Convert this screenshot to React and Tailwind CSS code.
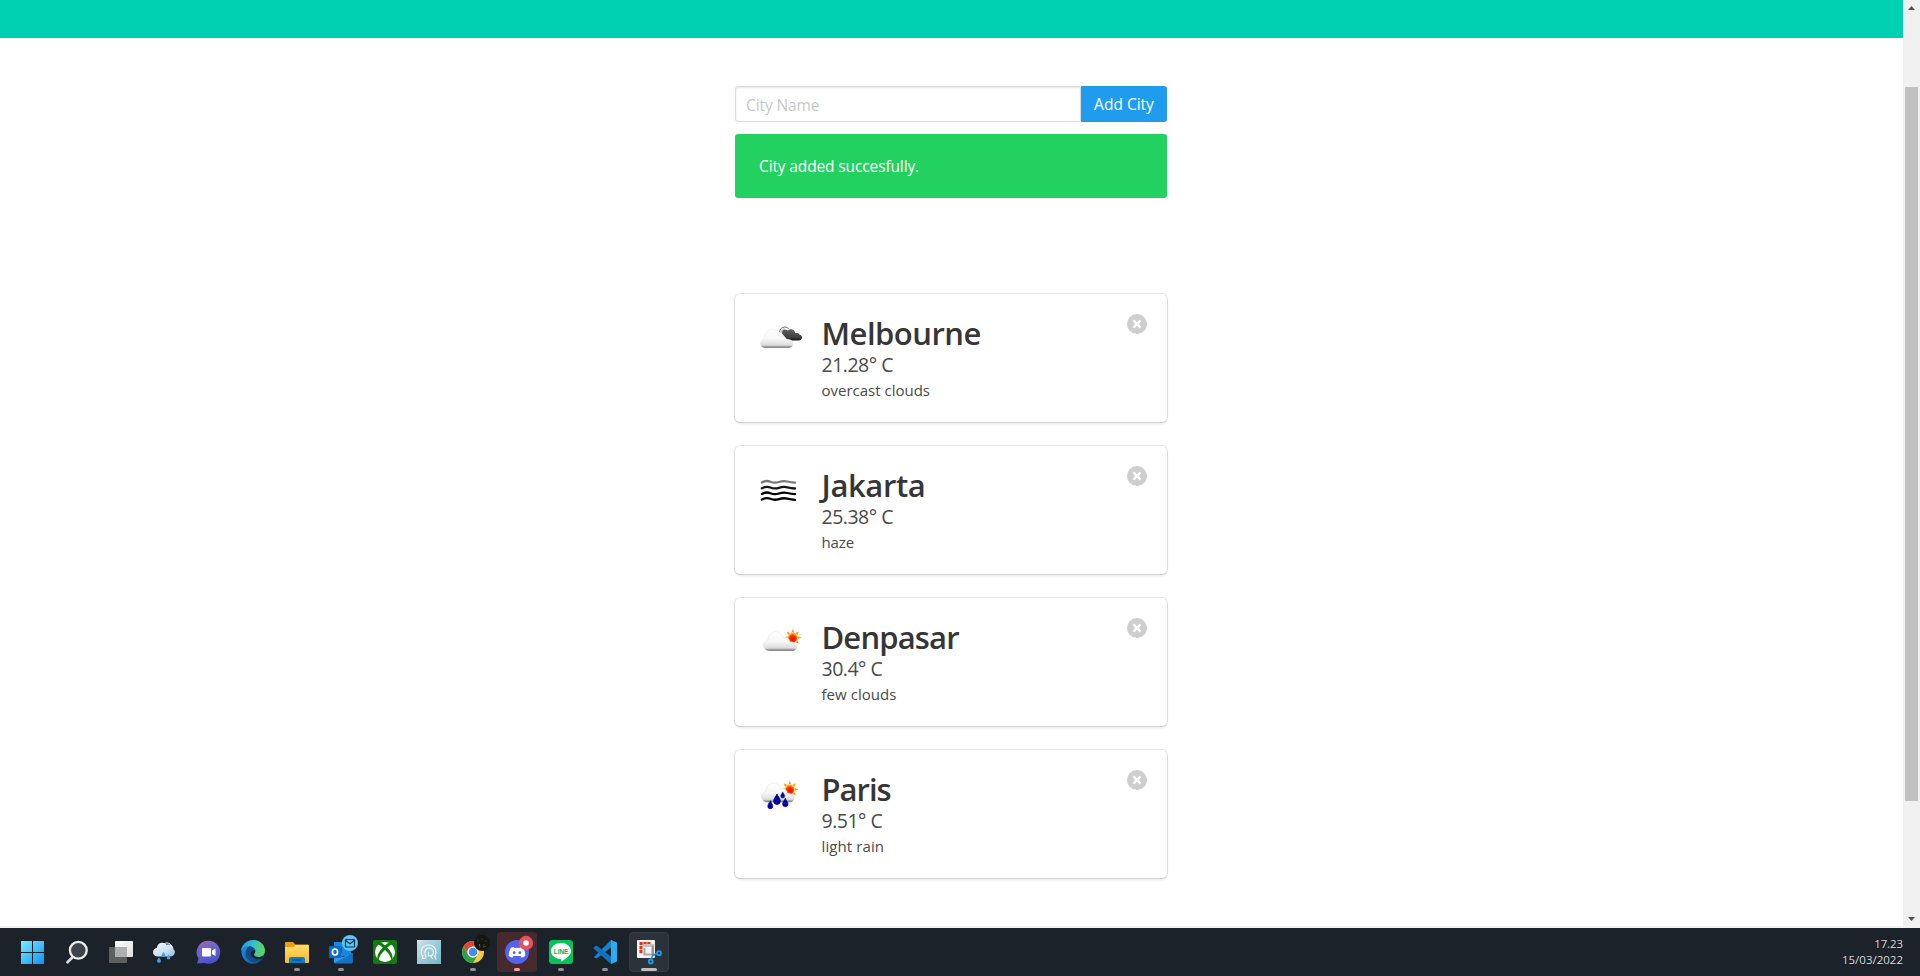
import React from "react";

const CLOUD = "M6 23.5c-4-.3-5.600-3.200-5.200-6.200.4-2.800 2.400-3.800 4-4.200.2-4.600 3.300-8 7.200-8s6.400 2.400 7.200 5.500c4-1 6 1.500 6.300 4 3.500.3 6.500 1.900 6.500 4.600 0 2.600-1.600 4.300-4 4.300z";

function SunRays({ cx, cy, r, len }) {
  const points = [];
  for (let i = 0; i < 8; i++) {
    const a = (i * Math.PI) / 4 - Math.PI / 2;
    const at = (radius, angle) => `${(cx + radius * Math.cos(angle)).toFixed(2)},${(cy + radius * Math.sin(angle)).toFixed(2)}`;
    points.push(`${at(r, a - 0.27)} ${at(r + len, a)} ${at(r, a + 0.27)}`);
  }
  return points.map((p) => <polygon key={p} points={p} fill="#ff9a0c" />);
}

function WeatherDefs({ id }) {
  return (
    <defs>
      <linearGradient id={`cloud-${id}`} x1="0" y1="0" x2="0" y2="1">
        <stop offset="0" stopColor="#fdfdfd" />
        <stop offset=".5" stopColor="#f8f8f8" />
        <stop offset=".85" stopColor="#dcdcdc" />
        <stop offset=".93" stopColor="#9a9a9a" />
        <stop offset="1" stopColor="#666" />
      </linearGradient>
      <radialGradient id={`sun-${id}`} cx=".5" cy=".6" r=".6">
        <stop offset="0" stopColor="#ff0a00" />
        <stop offset=".6" stopColor="#ff2a00" />
        <stop offset="1" stopColor="#ff9a0c" />
      </radialGradient>
      <linearGradient id={`dark-${id}`} x1="0" y1="0" x2="0" y2="1">
        <stop offset="0" stopColor="#606060" />
        <stop offset=".7" stopColor="#404040" />
        <stop offset="1" stopColor="#151515" />
      </linearGradient>
    </defs>
  );
}

function Overcast() {
  return (
    <svg className="h-[50px] w-[50px]" viewBox="0 0 50 50">
      <WeatherDefs id="o" />
      <path d="M27 19.500c-.2-2 .8-4 3-4 1 0 2 .3 2.800 1 1.400-1.200 3-1.600 4.700-.9 1.700.6 2.500 2 2.600 3.500 2.500-.3 4 .3 4.400 1.700 1.600.3 2.500 1.400 2.500 2.800 0 1.700-1.200 2.800-3 2.800H33z" fill="url(#dark-o)" />
      <path d="M24.500 18.200c.4-3.400 2.600-5.200 5.300-5.200 1.800 0 3 .7 3.700 1.800" fill="none" stroke="#6a6a6a" strokeWidth="1" />
      <path d="M26 18.800c.4-2.600 1.900-3.900 3.700-3.900" fill="none" stroke="#8a8a8a" strokeWidth=".8" />
      <path d="M9.500 34c-3.200-.3-4.300-2.700-3.900-5.200.4-2.200 1.900-3.300 3.500-3.700.2-5.600 3.500-9.800 8-9.800 4.200 0 7.300 3 8 6.700 3-.7 4.900.8 5.200 3.400 4.500-.7 7.600.9 7.600 4.300 0 2.700-1.700 4.300-4.400 4.300z" fill="url(#cloud-o)" stroke="#dedede" strokeWidth=".4" />
    </svg>
  );
}

function Haze() {
  const wave = (y) => `M6.900 ${y + 1}q4.500-2.500 8.500-.8t8.500.3 8.500-.5 7.600 1.200`;
  return (
    <svg className="h-[50px] w-[50px]" viewBox="0 0 50 50" fill="none" strokeWidth="2.300" strokeLinecap="round">
      <path d={wave(15.5)} stroke="#777" />
      <path d={wave(21.3)} stroke="#151515" />
      <path d={wave(27)} stroke="#000" />
      <path d={wave(32.6)} stroke="#000" />
    </svg>
  );
}

function FewClouds() {
  return (
    <svg className="h-[50px] w-[50px]" viewBox="0 0 50 50">
      <WeatherDefs id="f" />
      <SunRays cx={37.8} cy={19.6} r={5.4} len={3.2} />
      <circle cx="37.800" cy="19.600" r="4.900" fill="#ffab22" />
      <circle cx="37.800" cy="20" r="4.300" fill="url(#sun-f)" />
      <path transform="translate(7.900 8.300) scale(1.060 1.050)" d={CLOUD} fill="url(#cloud-f)" stroke="#d8d8d8" strokeWidth=".4" />
    </svg>
  );
}

function Drop({ x, y, s }) {
  return <path transform={`translate(${x} ${y}) scale(${s})`} d="M0-5C1-2.500 3.200-.7 3.200 1.800a3.200 3.200 0 0 1-6.400 0C-3.200-.7-1-2.500 0-5z" fill="#0606ad" stroke="#00005e" strokeWidth=".7" />;
}

function LightRain() {
  return (
    <svg className="h-[50px] w-[50px]" viewBox="0 0 50 50">
      <WeatherDefs id="r" />
      <SunRays cx={34.8} cy={19.4} r={5.4} len={3.2} />
      <circle cx="34.800" cy="19.400" r="4.900" fill="#ffab22" />
      <circle cx="34.800" cy="19.800" r="4.300" fill="url(#sun-r)" />
      <path transform="translate(5.900 7.600) scale(1.040 1.050)" d={CLOUD} fill="url(#cloud-r)" stroke="#d8d8d8" strokeWidth=".4" />
      <Drop x={15.3} y={34.7} s={0.8} />
      <Drop x={22} y={29.2} s={1.05} />
      <Drop x={30.3} y={32.5} s={0.85} />
      <Drop x={27.7} y={25} s={0.62} />
    </svg>
  );
}

const CITIES = [
  { name: "Melbourne", track: "tracking-[-0.5px]", temp: "21.28° C", text: "overcast clouds", textTrack: "tracking-[0px]", Icon: Overcast },
  { name: "Jakarta", track: "tracking-[-0.4px]", temp: "25.38° C", text: "haze", textTrack: "tracking-[-0.1px]", Icon: Haze },
  { name: "Denpasar", track: "tracking-[-0.85px]", temp: "30.4° C", text: "few clouds", textTrack: "tracking-[0.05px]", Icon: FewClouds },
  { name: "Paris", track: "tracking-[-1px]", temp: "9.51° C", text: "light rain", textTrack: "tracking-[0.1px]", Icon: LightRain },
];

function CityCard({ name, track, temp, text, textTrack, Icon }) {
  return (
    <article className="flex h-32 w-[432px] rounded-[5px] bg-white p-5 shadow-[0_2px_3px_rgba(10,10,10,0.1),0_0_0_1px_rgba(10,10,10,0.1)]">
      <div className="w-[66.500px] shrink-0">
        <Icon />
      </div>
      <div className="flex-1 whitespace-nowrap text-[#4a4a4a]">
        <h2 className={`h-9 text-[31px] leading-[38px] font-semibold text-[#363636] ${track}`}>{name}</h2>
        <p className="h-[27px] text-[19.500px] leading-[30px] tracking-[-0.5px]">{temp}</p>
        <p className={`text-[15px] leading-[27px] ${textTrack}`}>{text}</p>
      </div>
      <button className="h-5 w-5 shrink-0">
        <svg className="h-5 w-5" viewBox="0 0 20 20">
          <circle cx="10" cy="10" r="10" fill="#cecece" />
          <path d="M6.400 6.400l7.200 7.200M13.600 6.400l-7.200 7.200" stroke="#fff" strokeWidth="2.400" />
        </svg>
      </button>
    </article>
  );
}

function Pill({ x = 19, w = 6, fill = "#8f9297" }) {
  return <rect x={x} y="40" width={w} height="3" rx="1.500" fill={fill} />;
}

const TASKBAR = [
  {
    label: "Start",
    art: (
      <>
        <defs><linearGradient id="win" x1="10" y1="13" x2="33" y2="36" gradientUnits="userSpaceOnUse"><stop stopColor="#7beafd" /><stop offset="1" stopColor="#0c93f4" /></linearGradient></defs>
        <path d="M10 13h11v11H10zM22 13h11v11H22zM10 25h11v11H10zM22 25h11v11H22z" fill="url(#win)" />
      </>
    ),
  },
  {
    label: "Search",
    art: (
      <>
        <path d="M17.500 29.200l-5 5" stroke="#d9dadb" strokeWidth="2.800" strokeLinecap="round" />
        <circle cx="23.300" cy="22.300" r="8.400" fill="#3e444b" stroke="#eeeeef" strokeWidth="2.300" />
      </>
    ),
  },
  {
    label: "Task View",
    art: (
      <>
        <defs><linearGradient id="tv" x1="0" y1="0" x2="1" y2="1"><stop stopColor="#fff" /><stop offset="1" stopColor="#dedede" /></linearGradient></defs>
        <rect x="10" y="19" width="18" height="16" rx=".8" fill="#5e5f60" />
        <rect x="16" y="13" width="18" height="16" rx=".8" fill="url(#tv)" />
        <path d="M16 19h12v10H16z" fill="#b0b0b0" />
      </>
    ),
  },
  {
    label: "Weather",
    art: (
      <>
        <defs><linearGradient id="wc" x1="0" y1="0" x2="1" y2="1"><stop stopColor="#f6fbff" /><stop offset=".6" stopColor="#c9dff2" /><stop offset="1" stopColor="#8fb8de" /></linearGradient></defs>
        <path d="M15 28.500c-3 0-5-1.700-5-4.200 0-2.300 1.500-4 3.700-4.300.6-3.300 2.700-5.200 5.800-5.200 1.800 0 3 .8 4 2 4.500-1 7 1.500 6.900 4.500 1.200.8 1.700 1.800 1.500 3.200-.4 2.400-2.200 4-5 4z" fill="url(#wc)" />
        <path d="M21.500 15.500c3.500-1.500 6.800.3 7.500 4" fill="none" stroke="#fff" strokeWidth="1" />
        <path d="M20.500 24c1.400 1.900 1.700 2.600 1.700 3.200a1.700 1.700 0 0 1-3.400 0c0-.6.300-1.300 1.700-3.200zM16 29.500c1.600 2 1.900 2.700 1.900 3.400a1.900 1.900 0 0 1-3.800 0c0-.7.300-1.400 1.900-3.400zM25.500 26.500c1.500 1.900 1.800 2.500 1.800 3.200a1.800 1.800 0 0 1-3.600 0c0-.7.300-1.300 1.800-3.200z" fill="#40a0ef" />
      </>
    ),
  },
  {
    label: "Chat",
    art: (
      <>
        <defs><linearGradient id="chat" x1="0" y1="0" x2=".4" y2="1"><stop stopColor="#a466b6" /><stop offset=".5" stopColor="#6d62c8" /><stop offset="1" stopColor="#4a55cc" /></linearGradient></defs>
        <path d="M21.500 12.800A11.500 11.500 0 1 1 17.500 35L10 35.500l1.500-5A11.500 11.500 0 0 1 21.500 12.800z" fill="url(#chat)" />
        <rect x="15" y="20" width="9" height="8.500" rx="1" fill="#fff" />
        <path d="M25 22.500l3.500-2v7.500L25 26z" fill="#fff" />
      </>
    ),
  },
  {
    label: "Edge",
    art: (
      <>
        <defs>
          <linearGradient id="eg" x1="10" y1="18" x2="34" y2="24" gradientUnits="userSpaceOnUse"><stop stopColor="#2098d8" /><stop offset=".45" stopColor="#35bfd3" /><stop offset="1" stopColor="#69d64b" /></linearGradient>
          <linearGradient id="eb" x1="0" y1="0" x2="1" y2="1"><stop stopColor="#2793dd" /><stop offset="1" stopColor="#10509d" /></linearGradient>
        </defs>
        <circle cx="22" cy="24" r="11.500" fill="url(#eb)" />
        <path d="M10 23c.3-6 5.500-11 12-11 7 0 12 5 12 10.500 0 4-3 6.500-6.500 6.500-2.500 0-4.500-1-4.500-2.300 0-.7 1.200-1.200 1.200-3.200 0-2.900-2.800-5.500-6.700-5.500-3.500 0-6.300 2-7.500 5z" fill="url(#eg)" />
        <path d="M18.500 18.200c-4 2-5.300 8.300-2.300 12.300 3.200 4.300 10 5 14.500 1-4.500 1.600-11.500-.8-11-6.500.2-2.700 2-3.700 4.400-3.200-1-2.300-3.200-3.600-5.600-3.600z" fill="#114a8b" />
        <path d="M23 26.700c0 1.300 2 2.300 4.500 2.300 1.800 0 3.300-.6 4.400-1.600l-.6 3.100c-4 2.200-12.500.2-11.600-5.500.3-2 1.700-3.300 4.400-3.200.9 2.900-1.100 3.800-1.100 4.900z" fill="#1d232c" />
      </>
    ),
  },
  {
    label: "File Explorer",
    art: (
      <>
        <defs><linearGradient id="fold" x1="0" y1="0" x2="0" y2="1"><stop stopColor="#ffdc6b" /><stop offset="1" stopColor="#f7b92a" /></linearGradient></defs>
        <path d="M10 15a1 1 0 0 1 1-1h7l2.500 2.500H33a1 1 0 0 1 1 1V22H10z" fill="#e6a117" />
        <path d="M10 19h8.500l2-2H33a1 1 0 0 1 1 1v16a1 1 0 0 1-1 1H11a1 1 0 0 1-1-1z" fill="url(#fold)" />
        <path d="M14 35v-4a2 2 0 0 1 2-2h12a2 2 0 0 1 2 2v4z" fill="#117ac9" />
        <path d="M17.500 32h9" stroke="#0e4f8b" strokeWidth="1.200" />
        <Pill />
      </>
    ),
  },
  {
    label: "Outlook",
    art: (
      <>
        <path d="M15 14h17v14H15z" fill="#1787dc" />
        <path d="M15 19h8v6h-8z" fill="#0a5ca8" />
        <path d="M15 25l9 4 9.500-4v9a1.200 1.200 0 0 1-1.200 1.200H16A1.200 1.200 0 0 1 15 34z" fill="#2a9ceb" />
        <path d="M33.500 25L15 35.200h17.300a1.200 1.200 0 0 0 1.200-1.200z" fill="#1672c7" />
        <rect x="10" y="18" width="12" height="12" rx="1" fill="#0a6cc7" />
        <ellipse cx="16" cy="24" rx="2.600" ry="3" fill="none" stroke="#fff" strokeWidth="1.700" />
        <circle cx="31" cy="15" r="8" fill="#5ec3f6" />
        <rect x="26.500" y="11.500" width="9" height="7.500" rx=".6" fill="none" stroke="#12344a" strokeWidth="1.200" />
        <path d="M26.800 12.500L31 15.800l4.200-3.300" fill="none" stroke="#12344a" strokeWidth="1.100" />
        <Pill />
      </>
    ),
  },
  {
    label: "Xbox",
    art: (
      <>
        <rect x="10" y="12" width="24" height="24" rx="2" fill="#117b10" />
        <circle cx="22" cy="24" r="10" fill="#fff" />
        <path d="M22 17.200c-2.400-2-4.600-2.800-6-2.300-1 .6-1.500 1-1.800 1.500 2 .2 4 1.600 5.500 3.200-3.400 3.700-5.700 7.700-5.200 10.800.3.700.7 1.200 1.200 1.600.2-3.200 3.100-7 6.300-9.900 3.200 2.900 6.100 6.700 6.300 9.900.5-.4.900-.9 1.200-1.600.5-3.100-1.800-7.100-5.200-10.800 1.500-1.600 3.500-3 5.500-3.200-.3-.5-.8-.9-1.800-1.500-1.400-.5-3.600.3-6 2.300z" fill="#117b10" />
      </>
    ),
  },
  {
    label: "Assistant",
    art: (
      <>
        <defs><linearGradient id="asst" x1="0" y1="0" x2="1" y2="1"><stop stopColor="#d4e3e8" /><stop offset=".5" stopColor="#9cc9d8" /><stop offset="1" stopColor="#72b5cd" /></linearGradient></defs>
        <path d="M10 12h24v24H10z" fill="url(#asst)" />
        <path d="M18.500 30.500h-2.800v-2.800c-1.400-1-1.700-2.500-1.500-4.200.3-3.900 3.400-6.500 7.500-6.500 4.400 0 7.300 3 7.300 6.800 0 1.700-.5 3-1.300 4.200l1.300 3.500" fill="none" stroke="#f5fcff" strokeWidth="1.200" />
        <path d="M18.500 30.500c.5-1 .3-2.500-.2-3.800-1.500-3.700.7-6.700 3.700-6.700 2.500 0 4.300 1.800 4.300 4.200 0 2-1.300 3.600-3.300 3.600h-1.500M21.500 24v4.500M23.500 28l2.500 3" fill="none" stroke="#f5fcff" strokeWidth="1.100" />
      </>
    ),
  },
  {
    label: "Chrome",
    art: (
      <>
        <circle cx="22" cy="24" r="11" fill="#fbc934" />
        <path d="M12.500 18.500A11 11 0 0 1 31.500 18.500H22a5.500 5.500 0 0 0-4.800 8.200z" fill="#e14538" />
        <path d="M12.500 18.500A11 11 0 0 0 22 35l4.800-8.200a5.500 5.500 0 0 1-9.600 0z" fill="#27a350" />
        <circle cx="22" cy="24" r="5.600" fill="#fff" />
        <circle cx="22" cy="24" r="4.300" fill="#438bed" />
        <circle cx="31" cy="15" r="8" fill="#17150f" />
        <path d="M27 11v3M29 17v3M33 16v4M35 12v2M31 10v2" stroke="#3d341c" strokeWidth="1.200" />
        <path d="M28.500 16v2M34 18v1" stroke="#7d6630" strokeWidth="1" />
        <Pill />
      </>
    ),
  },
  {
    label: "Discord",
    art: (
      <>
        <rect x="2" y="4" width="40" height="40" rx="3.500" fill="#472a2d" />
        <circle cx="22" cy="24" r="12" fill="#5663ef" />
        <path d="M18.800 19c-1.300.2-2.500.7-3.200 1.200-1.300 2.500-2 5-1.900 7.800 1.200.9 2.500 1.400 3.700 1.700l1-1.700h7.200l1 1.700c1.200-.3 2.500-.8 3.700-1.700.1-2.800-.6-5.300-1.900-7.800-.7-.5-1.900-1-3.200-1.200l-.6 1.100a10 10 0 0 0-5.200 0z" fill="#fff" />
        <circle cx="19.200" cy="24.700" r="1.400" fill="#5663ef" />
        <circle cx="24.800" cy="24.700" r="1.400" fill="#5663ef" />
        <circle cx="31" cy="15" r="7.200" fill="#e3535a" />
        <circle cx="31" cy="15" r="2.800" fill="#fff" />
        <Pill fill="#ff9ba2" />
      </>
    ),
  },
  {
    label: "LINE chat",
    art: (
      <>
        <rect x="10" y="12" width="24" height="24" rx="3.500" fill="#07c255" />
        <path d="M22 15c5.500 0 10 3.500 10 8 0 4-4.500 7.500-10 10.800.6-1.700.5-2.700-.3-2.800C16 30.600 12 27.400 12 23c0-4.500 4.500-8 10-8z" fill="#fff" />
        <text x="22" y="25.600" textAnchor="middle" textLength="14.500" lengthAdjust="spacingAndGlyphs" fontFamily="Liberation Sans, sans-serif" fontSize="7" fontWeight="700" fill="#07b34e">LINE</text>
        <Pill />
      </>
    ),
  },
  {
    label: "Code editor",
    art: (
      <>
        <path d="M28 12l6 2.500v19L28 36z" fill="#2eaaf0" />
        <path d="M11.500 28.500L28 12v7.500L13.500 30.500l-3-1.500z" fill="#1684cf" />
        <path d="M10.500 19.500l3-2L28 28.500V36L10.500 20.500z" fill="#0e72bd" />
        <Pill />
      </>
    ),
  },
  {
    label: "Snipping Tool",
    art: (
      <>
        <rect x="2.500" y="4.500" width="39" height="39" rx="3.500" fill="#2c323a" stroke="#363b43" />
        <rect x="10" y="12" width="18" height="18" rx="1" fill="#f5f3f2" />
        <path d="M12.500 15.500h11" stroke="#d53a12" strokeWidth="3" strokeDasharray="3.200 .7" />
        <path d="M14 18v8" stroke="#d53a12" strokeWidth="3" strokeDasharray="3.200 .7" />
        <path d="M16 17.500h9.500v9" fill="none" stroke="#c2c3c5" strokeWidth="3" />
        <path d="M17.500 20v6.500H25" fill="none" stroke="#a5a8ab" strokeWidth="2" />
        <path d="M26 17.500v9.500l4-1.500" fill="none" stroke="#8e9194" strokeWidth="1.800" />
        <circle cx="32" cy="25.200" r="2" fill="none" stroke="#1c9be8" strokeWidth="1.800" />
        <circle cx="23.800" cy="33.500" r="2" fill="none" stroke="#1c9be8" strokeWidth="1.800" />
        <path d="M24.500 31l1-3.500 4-1.500" fill="none" stroke="#1688d2" strokeWidth="1.500" />
        <Pill x={14} w={16} fill="#bdbec0" />
      </>
    ),
  },
];

function Taskbar() {
  return (
    <footer className="flex h-12 items-center justify-between bg-[#1c222a] pr-[17px] pl-[11px]">
      <nav className="flex">
        {TASKBAR.map(({ label, art }) => (
          <button key={label} aria-label={label} className="h-12 w-11">
            <svg className="h-12 w-11" viewBox="0 0 44 48">{art}</svg>
          </button>
        ))}
      </nav>
      <div className="pb-px text-right text-[11.500px] leading-4 text-[#d5d7d9]">
        <p className="tracking-[-0.1px]">17.23</p>
        <p className="tracking-[0px]">15/03/2022</p>
      </div>
    </footer>
  );
}

function Scrollbar() {
  return (
    <div className="flex h-full w-[17px] flex-col items-center bg-[#f0f0f0]">
      <svg className="h-[17px] w-[17px] shrink-0" viewBox="0 0 17 17"><path d="M5 10l3.500-4 3.500 4z" fill="#505050" /></svg>
      <div className="mt-[70px] h-[714px] w-[13px] bg-[#c1c1c1]" />
      <svg className="mt-auto mb-px h-[17px] w-[17px] shrink-0" viewBox="0 0 17 17"><path d="M5 7h7l-3.500 4z" fill="#505050" /></svg>
    </div>
  );
}

export default function App() {
  return (
    <div className="flex h-[976px] w-[1920px] flex-col overflow-hidden bg-white font-['Open_Sans',sans-serif]">
      <div className="flex h-[928px]">
        <div className="flex w-[1903px] flex-col">
          <header className="h-[38px] shrink-0 bg-[#00d1b2]" />
          <main className="flex-1 pt-12 pl-[735px]">
            <form className="flex h-9 w-[432px]">
              <div className="flex flex-1 items-center rounded-l-[3px] border border-[#dbdbdb] pt-[3px] pl-2.5 text-[15.500px] tracking-[-0.1px] text-[#c7c7c7] shadow-[inset_0_1px_2px_rgba(10,10,10,0.1)]">City Name</div>
              <button type="button" className="w-[86px] rounded-r-[3px] bg-[#209cee] pt-px text-[15.500px] tracking-[0px] text-white">Add City</button>
            </form>
            <div className="mt-3 flex h-16 w-[432px] items-center rounded-[3px] bg-[#23d160] pt-0.5 pl-6 text-[15.500px] tracking-[-0.130px] text-white">City added succesfully.</div>
            <section className="mt-24 flex flex-col gap-6">
              {CITIES.map((city) => <CityCard key={city.name} {...city} />)}
            </section>
          </main>
          <div className="h-0.5 bg-[#f3f3f3]" />
        </div>
        <Scrollbar />
      </div>
      <Taskbar />
    </div>
  );
}
